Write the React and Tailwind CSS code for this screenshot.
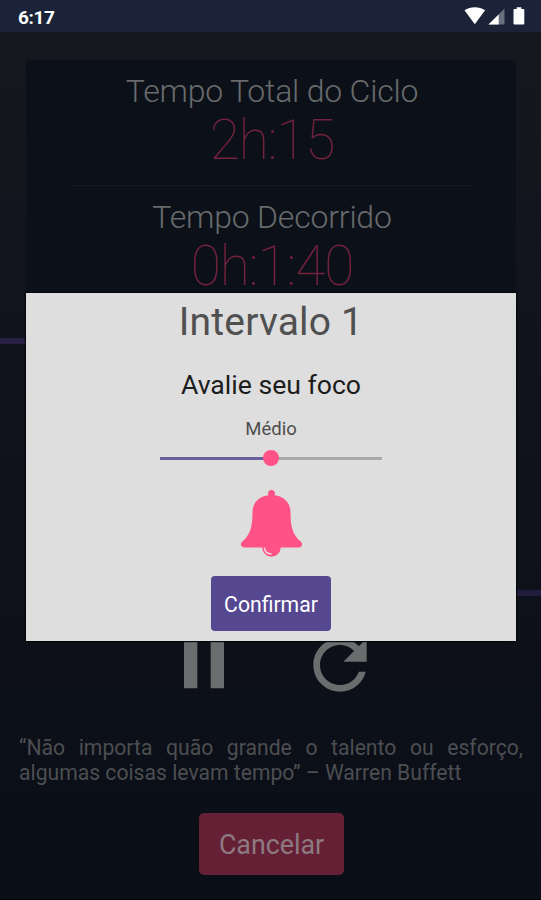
import React, { useState } from "react";

const LEVELS = ["Baixo", "Médio", "Alto"];

function StatusBar() {
  return (
    <div className="flex h-8 items-center justify-between bg-[#1b2338] pl-[18px] pr-[15px] text-white">
      <span className="pt-[2px] text-[19px] font-bold leading-none tracking-[-0.4px]">6:17</span>
      <svg width="62" height="20" viewBox="0 0 62 20" fill="#fff">
        <path d="M0.5 4.2C6.4 0.2 15.2 0.2 21.1 4.2L10.8 18.2z" />
        <path d="M40.5 2.6V18.6H24.5z" fillOpacity="0.35" />
        <path d="M34.7 8.4V18.6H24.5z" />
        <path d="M50.5 3h2.2V1.2h4.6V3h2q1 0 1 1v13.6q0 1-1 1h-8.8q-1 0-1-1V4q0-1 1-1z" />
      </svg>
    </div>
  );
}

function TimeBlock({ label, value }) {
  return (
    <div className="flex flex-col items-center">
      <p className="text-[32px] font-light leading-[38px] tracking-[-0.2px] text-[#686a6c]">{label}</p>
      <p className="mt-[-2px] text-[55px] font-thin leading-[64px] tracking-[-1.1px] text-[#74223e]">{value}</p>
    </div>
  );
}

function Bell() {
  return (
    <svg width="64" height="70" viewBox="0 0 64 70">
      <circle cx="32.5" cy="59.6" r="9.2" fill="#ff5286" />
      <path
        fill="#ff5286"
        d="M32.5 2c2 0 3.5 1.5 3.5 3.4 0 .7-.2 1.3-.5 1.900C45 8.500 51.400 14.500 51.500 24c.1 11 .8 18 6.200 25.500 1.200 1.700 2.700 3 4.300 4.300 2.200 2.200.8 5.600-2.100 5.600H5.100c-2.900 0-4.300-3.400-2.100-5.600 1.600-1.300 3.100-2.600 4.300-4.300C12.700 42 13.400 35 13.500 24 13.600 14.500 20 8.500 29.500 7.300c-.3-.6-.5-1.200-.5-1.900C29 3.500 30.500 2 32.500 2z"
      />
      <path d="M25.500 59.600c.2 4 3 6.200 7 6.400" fill="none" stroke="#f3dbe2" strokeWidth="1.4" />
    </svg>
  );
}

function FocusSlider({ value }) {
  const percent = (value / (LEVELS.length - 1)) * 100;
  return (
    <div className="relative flex h-4 w-[222px] items-center">
      <div className="h-[3px] w-full bg-[#a9a9a9]">
        <div className="h-full bg-[#685f9c]" style={{ width: `${percent}%` }} />
      </div>
      <div
        className="absolute size-4 -translate-x-1/2 rounded-full bg-[#ff5286]"
        style={{ left: `${percent}%` }}
      />
    </div>
  );
}

function FocusModal() {
  const [focus] = useState(1);

  return (
    <div className="absolute inset-x-0 top-[293px] flex justify-center">
      <div className="flex h-[348px] w-[490px] flex-col items-center bg-[#dedede] pl-px shadow-[0_0_1px_1px_#05070b]">
        <h2 className="mt-[5px] text-[39px] leading-[48px] tracking-[0.2px] text-[#505050]">Intervalo 1</h2>
        <p className="mt-[22px] text-[26.6px] leading-[34px] text-[#1c1c1c]">Avalie seu foco</p>
        <p className="mt-[15px] text-[18.5px] leading-[24px] text-[#4e4e4e]">{LEVELS[focus]}</p>
        <div className="mt-[9px]">
          <FocusSlider value={focus} />
        </div>
        <div className="mt-[22px]">
          <Bell />
        </div>
        <button className="mt-[18px] h-[55px] w-[120px] rounded-[4px] bg-[#554891] pt-[3px] text-[21.2px] text-white">
          Confirmar
        </button>
      </div>
    </div>
  );
}

export default function App() {
  return (
    <div className="relative flex h-[900px] w-[541px] flex-col overflow-hidden border-b border-black bg-[#0d111a] font-['Roboto',sans-serif]">
      <StatusBar />
      <main className="flex flex-1 flex-col bg-linear-to-b from-[#16181f] via-[#10131c] via-40% to-[#0a0e16]">
        <section className="ml-[26px] mr-[25px] mt-7 flex h-[250px] flex-col items-center rounded bg-[#0c1119] pl-[2px] pt-[12px]">
          <TimeBlock label="Tempo Total do Ciclo" value="2h:15" />
          <div className="mb-[12px] mt-[13px] h-px w-[396px] bg-[#141b27]" />
          <TimeBlock label="Tempo Decorrido" value="0h:1:40" />
        </section>

        {/* timeline strokes running behind the dialog */}
        <div className="mt-[28px] h-[6px] w-[270px] bg-[#282143]" />
        <div className="mt-[246px] h-[6px] w-[270px] self-end bg-[#211c3b]" />

        <div className="mt-[29px] flex justify-center gap-[56px] pl-[2px] text-[#6b6c6e]">
          <svg width="80" height="80" viewBox="0 0 24 24" fill="currentColor">
            <path d="M6 19h4V5H6v14zm8-14v14h4V5h-4z" />
          </svg>
          <svg width="80" height="80" viewBox="0 0 24 24" fill="currentColor">
            <path d="M17.65 6.35C16.2 4.9 14.21 4 12 4c-4.42 0-7.99 3.58-7.99 8s3.57 8 7.99 8c3.73 0 6.84-2.55 7.73-6h-2.08c-.82 2.33-3.04 4-5.65 4-3.31 0-6-2.69-6-6s2.69-6 6-6c1.66 0 3.14.69 4.22 1.78L13 11h7V4l-2.35 2.35z" />
          </svg>
        </div>

        <p className="ml-[19px] mr-[18px] mt-[30px] text-justify text-[21.15px] leading-[25px] text-[#4c4e52]">
          “Não importa quão grande o talento ou esforço, algumas coisas levam tempo” – Warren Buffett
        </p>

        <button className="ml-[199px] mt-[28px] h-[62px] w-[145px] rounded-[5px] bg-[#662036] pt-[3px] text-[26.8px] text-[#8d7a80]">
          Cancelar
        </button>
      </main>
      <FocusModal />
    </div>
  );
}
